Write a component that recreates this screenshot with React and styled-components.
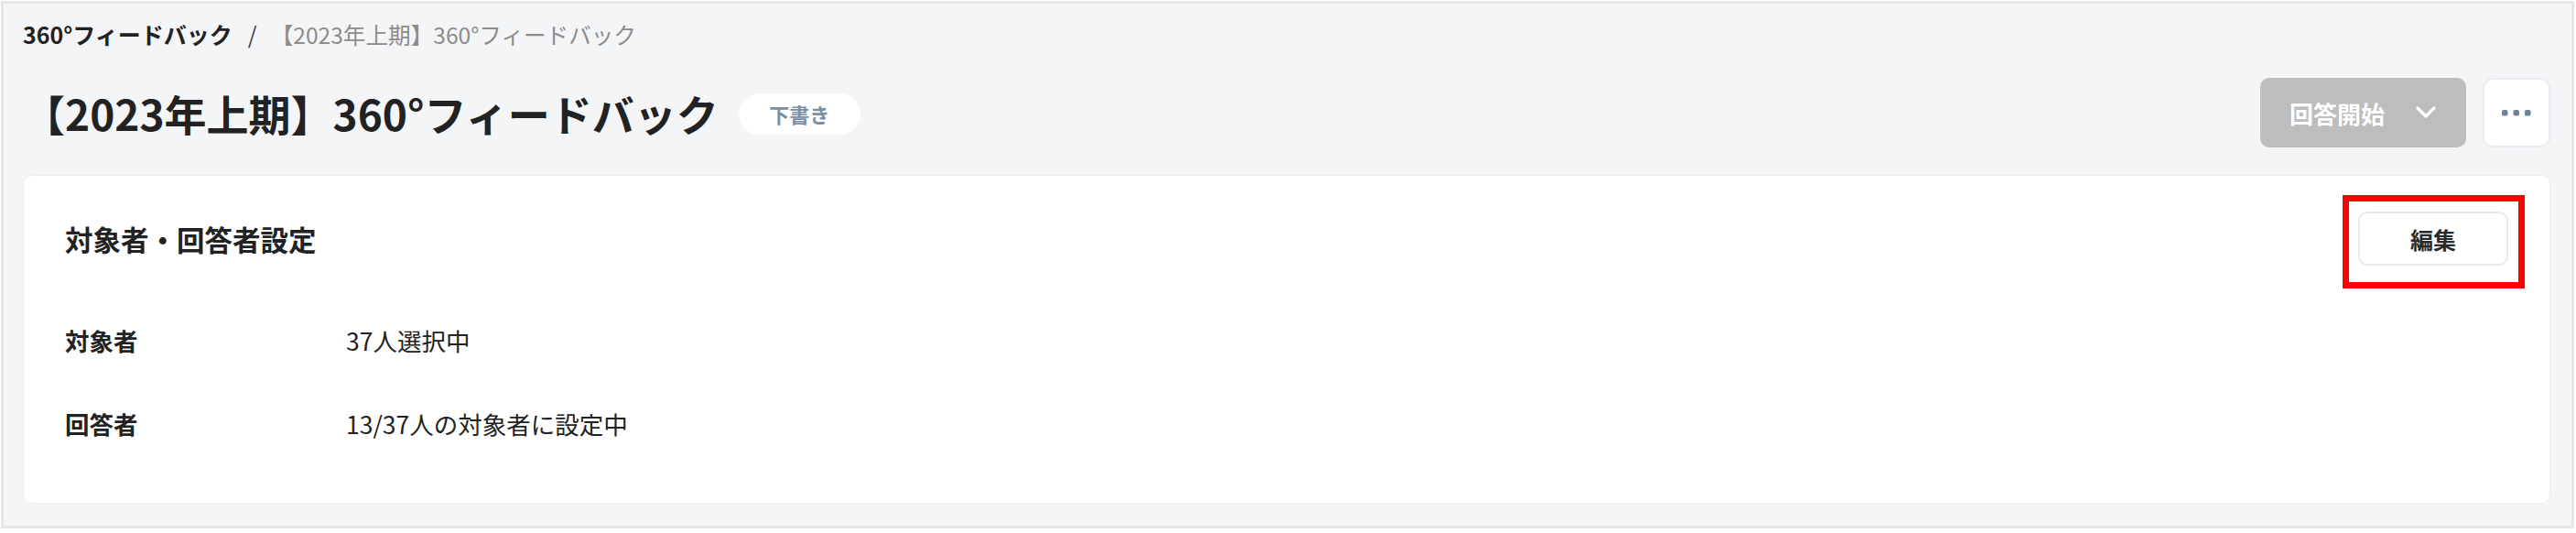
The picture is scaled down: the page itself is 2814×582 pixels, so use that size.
import React from "react";
import styled, { createGlobalStyle } from "styled-components";

const Global = createGlobalStyle`
  html, body { margin: 0; padding: 0; background: #ffffff; }
  body {
    font-family: "Noto Sans CJK JP", "Noto Sans", sans-serif;
    color: #222222;
    -webkit-font-smoothing: antialiased;
  }
  * { box-sizing: border-box; }
`;

const Frame = styled.div`
  margin: 1px 0 0 1px;
  width: 2811px;
  border: 3px solid #e6e6e6;
  background: #f4f5f7;
  padding: 15px 23px 24px 21px;
  display: flex;
  flex-direction: column;
`;

const Breadcrumb = styled.nav`
  display: flex;
  align-items: center;
  height: 36px;
  font-size: 25px;
  line-height: 36px;
`;

const Crumb = styled.span`
  font-weight: 700;
  color: #222222;
`;

const Sep = styled.span`
  margin: 0 15px 0 17px;
  color: #444444;
  font-weight: 400;
`;

const CrumbCurrent = styled.span`
  color: #8c8c8c;
  font-weight: 400;
  font-size: 24.6px;
`;

const TitleRow = styled.div`
  margin-top: 30px;
  height: 76px;
  display: flex;
  align-items: center;
  justify-content: space-between;
`;

const TitleGroup = styled.div`
  display: flex;
  align-items: center;
  gap: 22px;
`;

const Title = styled.h1`
  margin: 0;
  font-size: 46px;
  line-height: 60px;
  font-weight: 700;
  color: #222222;
`;

const Badge = styled.span`
  display: inline-flex;
  align-items: center;
  justify-content: center;
  width: 133px;
  height: 45px;
  border-radius: 23px;
  background: #ffffff;
  color: #7b8ea3;
  font-size: 22px;
  font-weight: 700;
  margin-top: 2px;
`;

const Actions = styled.div`
  display: flex;
  align-items: center;
  gap: 18px;
`;

const StartButton = styled.button`
  display: inline-flex;
  align-items: center;
  gap: 34px;
  height: 76px;
  width: 225px;
  padding: 0 0 0 32px;
  border: none;
  border-radius: 10px;
  background: #bdbdbd;
  color: #ffffff;
  font-family: inherit;
  font-size: 26px;
  font-weight: 700;
`;

const MoreButton = styled.button`
  display: inline-flex;
  align-items: center;
  justify-content: center;
  width: 74px;
  height: 76px;
  padding: 0;
  border: 2px solid #e9ecf0;
  border-radius: 11px;
  background: #ffffff;
`;

const Card = styled.section`
  margin-top: 30px;
  background: #ffffff;
  border: 1px solid #eceef1;
  border-radius: 10px;
  padding: 39px 45px 41px 45px;
  display: flex;
  flex-direction: column;
`;

const CardHeader = styled.div`
  display: flex;
  align-items: center;
  justify-content: space-between;
  height: 59px;
`;

const CardTitle = styled.h2`
  margin: 0;
  font-size: 30.5px;
  font-weight: 700;
  color: #222222;
`;

const EditWrap = styled.div`
  position: relative;
`;

const EditButton = styled.button`
  width: 164px;
  height: 59px;
  border: 2px solid #e7eaee;
  border-radius: 10px;
  background: #ffffff;
  color: #2a2a2a;
  font-family: inherit;
  font-size: 25px;
  font-weight: 700;
  padding: 0;
`;

const Highlight = styled.div`
  position: absolute;
  left: -17px;
  top: -18px;
  width: 199px;
  height: 102px;
  border: 7px solid #ff0000;
  pointer-events: none;
`;

const InfoList = styled.dl`
  margin: 36px 0 0 0;
  display: flex;
  flex-direction: column;
`;

const InfoRow = styled.div`
  display: flex;
  align-items: center;
  height: 91px;
`;

const Label = styled.dt`
  width: 307px;
  font-size: 26.5px;
  font-weight: 700;
  color: #222222;
`;

const Value = styled.dd`
  margin: 0;
  font-size: 26.5px;
  font-weight: 400;
  color: #222222;
`;

const Chevron = () => (
  <svg width="22" height="14" viewBox="0 0 22 14" fill="none">
    <polyline points="2,2 11,11 20,2" stroke="#ffffff" strokeWidth="3.2" strokeLinecap="round" strokeLinejoin="round" />
  </svg>
);

const Dots = () => (
  <svg width="34" height="8" viewBox="0 0 34 8">
    <rect x="1" y="1" width="6.5" height="6.5" rx="1.8" fill="#6e8298" />
    <rect x="13.5" y="1" width="6.5" height="6.5" rx="1.8" fill="#6e8298" />
    <rect x="26" y="1" width="6.5" height="6.5" rx="1.8" fill="#6e8298" />
  </svg>
);

const rows = [
  { label: "対象者", value: "37人選択中" },
  { label: "回答者", value: "13/37人の対象者に設定中" },
];

export default function App() {
  return (
    <>
      <Global />
      <Frame>
        <Breadcrumb>
          <Crumb>360°フィードバック</Crumb>
          <Sep>/</Sep>
          <CrumbCurrent>【2023年上期】360°フィードバック</CrumbCurrent>
        </Breadcrumb>
        <TitleRow>
          <TitleGroup>
            <Title>【2023年上期】360°フィードバック</Title>
            <Badge>下書き</Badge>
          </TitleGroup>
          <Actions>
            <StartButton type="button">
              回答開始
              <Chevron />
            </StartButton>
            <MoreButton type="button" aria-label="その他">
              <Dots />
            </MoreButton>
          </Actions>
        </TitleRow>
        <Card>
          <CardHeader>
            <CardTitle>対象者・回答者設定</CardTitle>
            <EditWrap>
              <EditButton type="button">編集</EditButton>
              <Highlight />
            </EditWrap>
          </CardHeader>
          <InfoList>
            {rows.map((r) => (
              <InfoRow key={r.label}>
                <Label>{r.label}</Label>
                <Value>{r.value}</Value>
              </InfoRow>
            ))}
          </InfoList>
        </Card>
      </Frame>
    </>
  );
}
